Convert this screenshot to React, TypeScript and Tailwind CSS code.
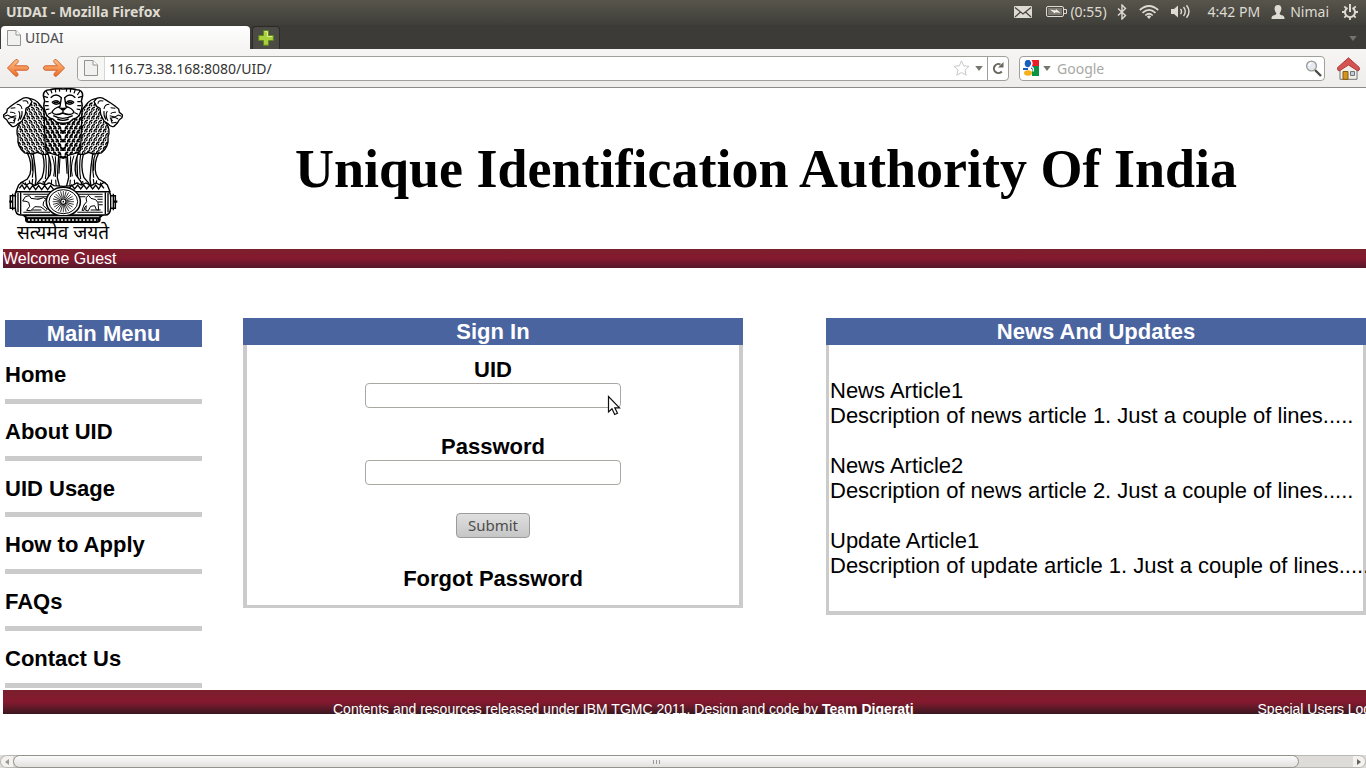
import React from 'react';

const UI = "font-['Noto_Sans','Open_Sans',sans-serif]";

function PageIcon() {
  return (
    <svg width="14" height="16" viewBox="0 0 14 16" aria-hidden="true">
      <path d="M.5 .5h8.5l4.500 4.500v10.500h-13z" fill="#f1f1f0" stroke="#93938f" />
      <path d="M9 .5v4.500h4.500" fill="#fff" stroke="#93938f" />
    </svg>
  );
}

function NavArrow({ flip = false }: { flip?: boolean }) {
  return (
    <svg width="24" height="20" viewBox="0 0 24 20" className={flip ? '-scale-x-100' : ''} aria-hidden="true">
      <defs>
        <linearGradient id="orange" x1="0" y1="0" x2="0" y2="1">
          <stop offset="0" stopColor="#fbc58c" />
          <stop offset="1" stopColor="#ef6a24" />
        </linearGradient>
      </defs>
      <path
        d="M1.500 10L9.500 1.800Q11.500 .8 12.300 2.800Q12.500 3.800 11.500 4.800L8.800 7.800H20.500Q22.500 8 22.500 10Q22.500 12 20.500 12.200H8.800L11.500 15.200Q12.500 16.500 11.700 17.700Q10.500 18.900 9 17.700Z"
        fill="url(#orange)"
        stroke="#d3602c"
        strokeWidth="1"
        strokeLinejoin="round"
      />
    </svg>
  );
}

function Caret({ className = 'fill-[#77756f]' }: { className?: string }) {
  return (
    <svg width="8" height="5" viewBox="0 0 9 6" className={className} aria-hidden="true">
      <path d="M0 0h9L4.500 6z" />
    </svg>
  );
}

function StatusArea() {
  return (
    <div className="flex items-center pr-[8px] text-[14px] text-[#dfdbd2]">
      <svg width="18" height="12" viewBox="0 0 18 12" aria-label="Mail">
        <rect width="18" height="12" rx="1" fill="#dfdbd2" />
        <path d="M1 1.500L9 8l8-6.500M1 11l5.500-5M17 11l-5.500-5" fill="none" stroke="#45433d" strokeWidth="1.200" />
      </svg>
      <svg width="21" height="11" viewBox="0 0 21 11" className="ml-[14px]" aria-label="Battery">
        <rect x=".5" y=".5" width="17" height="10" rx="1.500" fill="none" stroke="#dfdbd2" />
        <rect x="2" y="2" width="14" height="7" fill="#7b786f" />
        <path d="M4 3.500l5.500 1 .5-1.500 4.500 4-5-.8-.7 1.300z" fill="#f2efe8" />
        <path d="M18 3.500h2.500v4H18" fill="none" stroke="#dfdbd2" />
      </svg>
      <span className="ml-[3px]">(0:55)</span>
      <svg width="10" height="16" viewBox="0 0 10 16" className="ml-[10px]" aria-label="Bluetooth">
        <path d="M1 4.500l7.500 7L5 15V1l3.500 3.500-7.500 7" fill="none" stroke="#dfdbd2" strokeWidth="1.400" />
      </svg>
      <svg width="20" height="14" viewBox="0 0 20 14" className="ml-[12px]" aria-label="Wireless">
        <g fill="none" stroke="#dfdbd2" strokeWidth="1.700">
          <path d="M.8 5Q10-3 19.200 5" />
          <path d="M3.500 7.800Q10 2 16.500 7.800" />
          <path d="M6.300 10.500Q10 7 13.700 10.500" />
        </g>
        <path d="M7.800 11.500Q10 9.500 12.200 11.500L10 14z" fill="#dfdbd2" />
      </svg>
      <svg width="21" height="15" viewBox="0 0 21 15" className="ml-[12px]" aria-label="Volume">
        <path d="M0 5h3l4-3.500v12L3 10H0z" fill="#dfdbd2" />
        <g fill="none" stroke="#dfdbd2" strokeWidth="1.400">
          <path d="M9.500 4.800q2 2.700 0 5.400M12.500 3q3.500 4.500 0 9M15.500 1.200q5 6.300 0 12.600" />
        </g>
      </svg>
      <span className="ml-[16px]">4:42 PM</span>
      <svg width="14" height="14" viewBox="0 0 14 14" className="ml-[11px]" aria-hidden="true">
        <path d="M7 0c5 0 3.500 6.500 1.700 8 0 1.500.5 1.800 2.300 2.300 2 .6 2.500 1.200 2.500 3.700H.5c0-2.500.5-3.100 2.500-3.700C4.800 9.800 5.300 9.500 5.300 8 3.500 6.500 2 0 7 0z" fill="#dfdbd2" />
      </svg>
      <span className="ml-[5px]">Nimai</span>
      <svg width="16" height="16" viewBox="0 0 16 16" className="ml-[13px]" aria-label="Session">
        <path d="M5.500 3.800a5 5 0 1 0 5 0" fill="none" stroke="#dfdbd2" strokeWidth="2" />
        <path d="M8 0v8" stroke="#dfdbd2" strokeWidth="2" />
        <path d="M0 8h3M13 8h3M2.300 2.300l2 2M13.700 2.300l-2 2M2.300 13.700l2-2M13.700 13.700l-2-2M8 13v3" stroke="#dfdbd2" strokeWidth="1.800" />
      </svg>
    </div>
  );
}

function BrowserChrome() {
  return (
    <header className={`${UI} text-[14px]`}>
      <div className="flex h-[25px] items-center justify-between bg-linear-to-b from-[#57554b] to-[#3f3e39] pb-[2px] pl-[6px]">
        <span className="text-[14px] font-bold text-[#dfdbd2]">UIDAI - Mozilla Firefox</span>
        <StatusArea />
      </div>
      <div className="flex h-[24px] items-end bg-[#3c3b37] pr-[9px] pl-[1px]">
        <div className="flex h-[23px] w-[249px] items-center gap-[4px] rounded-t-[4px] bg-linear-to-b from-white to-[#f5f4f3] pl-[6px] text-[#4c4c4c]">
          <PageIcon />
          <span>UIDAI</span>
        </div>
        <button type="button" aria-label="New tab" className="ml-[2px] flex h-[23px] w-[28px] items-center justify-center rounded-t-[4px] border border-b-0 border-[#2b2a27] bg-[#4b4a45]">
          <svg width="16" height="16" viewBox="0 0 16 16" aria-hidden="true">
            <path d="M5.500 .7h5v4.800h4.800v5h-4.800v4.800h-5v-4.800H.7v-5h4.800z" fill="#a9cf3c" stroke="#5d8a1b" />
            <path d="M6.500 1.700h3v4.800h4.800" fill="none" stroke="#dcee98" />
          </svg>
        </button>
        <button type="button" aria-label="List all tabs" className="mb-[8px] ml-auto">
          <Caret className="fill-[#74726b]" />
        </button>
      </div>
      <div className="flex h-[39px] items-center border-b border-[#8c8b88] bg-linear-to-b from-[#f6f5f4] to-[#eeedeb] pr-[6px] pl-[6px]">
        <button type="button" aria-label="Back"><NavArrow /></button>
        <button type="button" aria-label="Forward" className="ml-[12px]"><NavArrow flip /></button>
        <div className="ml-[11px] flex h-[25px] flex-1 items-center rounded-[4px] border border-[#a09f9a] bg-white">
          <span className="flex h-full w-[27px] items-center justify-center rounded-l-[4px] border-r border-[#d6d5d2] bg-[#f6f6f5]"><PageIcon /></span>
          <input aria-label="Address" defaultValue="116.73.38.168:8080/UID/" className="h-full min-w-0 flex-1 bg-transparent pl-[4px] text-[#333] outline-none" />
          <svg width="17" height="16" viewBox="0 0 17 16" aria-hidden="true">
            <path d="M8.500 .8l2.200 5 5.300.5-4 3.700 1.200 5.200-4.700-2.700-4.700 2.700L5 10 1 6.300l5.300-.5z" fill="#fff" stroke="#c9c8c5" />
          </svg>
          <button type="button" aria-label="History" className="mr-[4px] ml-[5px]"><Caret /></button>
          <button type="button" aria-label="Reload" className="flex h-full w-[21px] items-center justify-center border-l border-[#a09f9a]">
            <svg width="12" height="12" viewBox="0 0 12 12" aria-hidden="true">
              <path d="M8.500 2.500A4.500 4.500 0 1 0 9.800 9.500" fill="none" stroke="#6a675e" strokeWidth="2" />
              <path d="M11.500 0v5.500H6z" fill="#6a675e" />
            </svg>
          </button>
        </div>
        <div className="ml-[10px] flex h-[25px] w-[306px] items-center rounded-[4px] border border-[#a09f9a] bg-white pr-[2px] pl-[3px]">
          <svg width="16" height="16" viewBox="0 0 16 16" aria-hidden="true">
            <path d="M8 0h8v6H8z" fill="#ec1c24" />
            <path d="M9 6h7v10H9z" fill="#0a9343" />
            <path d="M0 6h8v10H0z" fill="#fff" />
            <path d="M0 8h5v2H0zM8 6h3v3H8z" fill="#1b5ebd" />
            <ellipse cx="5" cy="3.500" rx="3.300" ry="3.700" fill="#1b5ebd" />
            <path d="M7.500 0q3 3.500 0 6.500 4 1 2.500 5" fill="none" stroke="#fff" strokeWidth="1.400" />
            <ellipse cx="5" cy="13" rx="4" ry="2.800" fill="#f6b11a" />
          </svg>
          <span className="ml-[4px]"><Caret /></span>
          <input aria-label="Search" placeholder="Google" className="h-full min-w-0 flex-1 bg-transparent pl-[6px] outline-none placeholder:text-[#a9a8a5]" />
          <svg width="17" height="17" viewBox="0 0 17 17" aria-hidden="true">
            <path d="M10 10l6 6" stroke="#4b4b49" strokeWidth="2.400" />
            <circle cx="6.500" cy="6" r="4.900" fill="#e4eaf0" stroke="#9a9a96" strokeWidth="1.300" />
            <path d="M3.800 6q.2-2.500 2.700-2.700" fill="none" stroke="#fff" strokeWidth="1.400" />
          </svg>
        </div>
        <button type="button" aria-label="Home" className="ml-[12px]">
          <svg width="23" height="23" viewBox="0 0 23 23" aria-hidden="true">
            <path d="M3 11L11.500 4 20 11v11.300H3z" fill="#f0efeb" stroke="#777570" />
            <path d="M11.500 .8L22.300 10.500q.7 3-1.300 3.500L11.500 8 2 14q-2-.5-1.300-3.500z" fill="#d65353" stroke="#b03a3a" />
            <path d="M6 14.500h5v7.800H6z" fill="#d5941f" stroke="#875b10" />
            <path d="M13.500 14.500h4v4h-4z" fill="#b9cde3" stroke="#777570" />
          </svg>
        </button>
      </div>
    </header>
  );
}

function curls(x0: number, x1: number, y0: number, y1: number, lean: number) {
  let d = '';
  let row = 0;
  for (let y = y0; y < y1; y += 13) {
    for (let x = x0 + (row % 2) * 7; x < x1; x += 14) {
      d += `M${x} ${y}q${lean + 8} 0 ${lean + 8} 10M${x + 2} ${y + 5}l${lean + 1} 5`;
    }
    row += 1;
  }
  return d;
}

function SideLion() {
  return (
    <g>
      <path
        d="M84 36Q106 36 120 56L142 84 148 200 132 206 112 198 96 204 74 200Q50 180 54 152 46 132 58 112L66 70Z"
        fill="#fff"
        stroke="#000"
        strokeWidth="4"
      />
      <path d={curls(44, 150, 50, 204, 2)} fill="none" stroke="#000" strokeWidth="3.800" clipPath="url(#leftBody)" />
      <path
        d="M62 40Q74 30 88 36L96 46 88 60 78 66 76 84 66 104 54 112Q46 124 36 120L26 110 20 100 12 94 10 86 20 78 22 68 34 58 46 50Z"
        fill="#fff"
        stroke="#000"
        strokeWidth="4"
      />
      <path d="M13 90l10-4 10 6 16-4M24 98q10-8 22-2l-4 14-14-2M32 66l14-2M50 54q14 0 16 14M68 44q16-4 16 8M56 74q8 12-2 30M66 74q2 14-6 26M30 78q10-2 16 4M40 104l8-10" fill="none" stroke="#000" strokeWidth="3.200" />
      <path d="M82 200Q98 230 90 264L82 278 62 290 54 306H104L108 280Q106 240 100 204Z" fill="#fff" stroke="#000" strokeWidth="4" />
      <path d="M128 204Q138 240 126 274L112 290 106 305H144L148 204Z" fill="#fff" stroke="#000" strokeWidth="4" />
      <path d="M92 204q12 30 5 70M96 214l2 40M136 204q6 40 0 74M66 295l6 9M76 288l4 15M88 282l2 20M98 278l-3 24M118 292l3 12M130 284l-2 20" fill="none" stroke="#000" strokeWidth="3.400" />
    </g>
  );
}

function Emblem() {
  const spokes = Array.from({ length: 24 }, (_, i) => i * 15);
  return (
    <svg width="120" height="154" viewBox="9 5 360 462" role="img" aria-label="State Emblem of India" className="shrink-0">
      <defs>
        <clipPath id="leftBody">
          <path d="M84 38Q106 38 120 56L142 84 148 200 132 204 112 197 96 202 74 198Q52 180 56 152 48 132 60 112L66 70Z" />
        </clipPath>
        <clipPath id="midBody">
          <path d="M132 74H246L242 190Q215 216 190 216T136 190Z" />
        </clipPath>
      </defs>
      <SideLion />
      <g transform="translate(378 0) scale(-1 1)">
        <SideLion />
      </g>

      <path d="M132 74H246L242 190Q232 206 216 206L190 216 162 206Q146 206 136 190Z" fill="#fff" stroke="#000" strokeWidth="4" />
      <g clipPath="url(#midBody)" fill="none" stroke="#000" strokeWidth="4.800">
        <path d={curls(124, 186, 80, 212, 1)} />
        <g transform="translate(378 0) scale(-1 1)">
          <path d={curls(124, 186, 80, 212, 1)} />
        </g>
      </g>

      <path d="M142 198Q158 234 150 266L134 288V306H180L172 274 176 208ZM236 198Q220 234 228 266L244 288V306H198L206 274 202 208Z" fill="#fff" stroke="#000" strokeWidth="4" />
      <path d="M156 208q12 30 5 62M166 210q3 30 0 62M222 208q-12 30-5 62M212 210q-3 30 0 62M144 288l2 16M155 280l-2 24M167 280l2 24M234 288l-2 16M223 280l2 24M211 280l-2 24M180 212l-3 50M198 212l3 50" fill="none" stroke="#000" strokeWidth="3.200" />

      <path
        d="M150 10Q170 5 190 8 210 5 230 10 248 10 248 28L244 44Q250 60 242 76 238 94 220 98L208 108Q190 114 170 108L158 98Q140 94 136 76 128 60 134 44L130 28Q130 10 150 10Z"
        fill="#fff"
        stroke="#000"
        strokeWidth="4.500"
      />
      <path d="M138 14l8 12M152 9l4 12M166 8l1 10M178 8l1 8M200 8l-1 8M212 8l-1 10M226 9l-4 12M240 14l-8 12M132 30l12 4M246 30l-12 4M136 46h10M134 58h12M138 70l10-2M144 84l10-5M242 46h-10M244 58h-12M240 70l-10-2M234 84l-10-5" stroke="#000" strokeWidth="3.600" />
      <path d="M152 34Q168 18 184 34L180 60Q160 66 156 78 166 90 188 80 212 90 222 78 218 66 198 60L194 34Q210 18 226 34M156 48q14-10 24 2-14 8-24-2M222 48q-14-10-24 2 14 8 24-2M174 62q14 10 30 0M189 66v12M160 88q28 16 58 0M172 98q16 8 34 0" fill="none" stroke="#000" strokeWidth="4.200" />
      <path d="M162 46h12v5h-12zM204 46h12v5h-12zM178 64h22l-6 8h-10z" fill="#000" />

      <path d="M56 296L66 288 78 296 90 290 104 298 120 290 134 296 148 290 162 298 190 300 216 298 230 290 244 296 258 290 274 298 288 290 300 296 312 288 322 296 330 316H48Z" fill="#fff" stroke="#000" strokeWidth="4" />
      <path d="M58 306l8-10 7 12 8-10 8 12 9-12 9 12 9-12 9 12 9-12 9 12 9-12 9 12M206 308l9-12 9 12 9-12 9 12 9-12 9 12 9-12 9 12 9-12 9 12 8-12 8 10" fill="none" stroke="#000" strokeWidth="4" />
      <path d="M50 316H326Q332 320 332 328H346V366H332Q330 386 316 386H62Q46 386 46 366H31V328H46Q44 320 50 316Z" fill="#fff" stroke="#000" strokeWidth="4.500" />
      <path d="M38 322v50M46 326v42M54 320v58M62 318v66M316 318v66M324 320v58M332 326v42M340 322v50" stroke="#000" strokeWidth="4" />
      <path d="M28 346h10M340 346h12" stroke="#000" strokeWidth="7" />
      <path d="M70 324h76M104 331h38M112 338h26M70 378h80M84 371h40M232 324h76M240 331h16M284 331h24M232 378h76M272 371h30M292 339h16M292 347h16M296 355h12" stroke="#000" strokeWidth="3.200" />
      <path d="M68 344l8-13 12-3 5 8 22 3 15-5 9 5-8 7-2 11 13 12-5 4-14-11-18-1-13 12-12-1 9-12-3-12-8-3z" fill="#fff" stroke="#000" strokeWidth="3" />
      <path d="M246 372l6-16 8-10-2-12 8-7 7 9 14 4 7 9 2 22-7-1-5-12-12 2-8 14-7-2 2-14-5 5-2 9z" fill="#fff" stroke="#000" strokeWidth="3" />
      <ellipse cx="190" cy="346" rx="51" ry="43" fill="#fff" stroke="#000" strokeWidth="4.500" />
      <ellipse cx="190" cy="346" rx="43" ry="36" fill="#fff" stroke="#000" strokeWidth="3" />
      {spokes.map((a) => (
        <path key={a} d="M190 336V314" stroke="#000" strokeWidth="2.200" transform={`rotate(${a} 190 346)`} />
      ))}
      <circle cx="190" cy="346" r="8" fill="#fff" stroke="#000" strokeWidth="3.500" />
      <circle cx="190" cy="346" r="2.500" fill="#000" />

      <path d="M66 386H312L302 394V402Q300 410 290 410H86Q76 410 75 402V394Z" fill="#000" />
      <path d="M80 391H298" stroke="#fff" strokeWidth="2.500" />
      <path d="M84 401H294" stroke="#fff" strokeWidth="5" strokeDasharray="6 5" />
      <text x="189" y="459" textAnchor="middle" className="font-['Noto_Sans_Devanagari','Noto_Sans',sans-serif] text-[57px]">
        सत्यमेव जयते
      </text>
    </svg>
  );
}

const menu = ['Home', 'About UID', 'UID Usage', 'How to Apply', 'FAQs', 'Contact Us'];

const news = [
  ['News Article1', 'Description of news article 1. Just a couple of lines.....'],
  ['News Article2', 'Description of news article 2. Just a couple of lines.....'],
  ['Update Article1', 'Description of update article 1. Just a couple of lines.....'],
];

const panelTitle = 'bg-[#4a64a0] text-center font-bold leading-[27px] text-white';
const field = 'mt-[1px] block h-[25px] w-[256px] rounded-[4px] border border-[#a9a8a2] bg-white px-[4px] outline-none';

export default function App() {
  return (
    <div className="flex min-h-screen flex-col overflow-hidden bg-white font-['Liberation_Sans',Arial,sans-serif] text-black">
      <BrowserChrome />

      <main className="flex-1 pl-[3px]">
        <div className="flex h-[161px] items-start gap-[43px]">
          <Emblem />
          <h1 className="flex-1 pt-[49px] text-center font-['Liberation_Serif',serif] text-[54px] leading-[64px] font-bold whitespace-nowrap">
            Unique Identification Authority Of India
          </h1>
        </div>

        <p className="bg-linear-to-b from-[#7b1f2c] via-[#85192f] to-[#56172a] text-[16px] leading-[19px] text-white">Welcome Guest</p>

        <div className="flex items-start pt-[50px] text-[22px] leading-[25px]">
          <nav aria-label="Main" className="mt-[2px] ml-[2px] w-[197px] shrink-0">
            <h2 className={panelTitle}>Main Menu</h2>
            <ul className="grid h-[341px] grid-rows-6 font-bold">
              {menu.map((item) => (
                <li key={item} className="border-b-[5px] border-[#cbcbcb] pt-[15px]">
                  <a href="#">{item}</a>
                </li>
              ))}
            </ul>
          </nav>

          <section className="ml-[41px] w-[500px] shrink-0">
            <h2 className={panelTitle}>Sign In</h2>
            <form
              className="flex flex-col items-center border-x-4 border-b-[3px] border-[#cbcbcb] pt-[12px] pb-[14px] font-bold"
              onSubmit={(e: React.FormEvent) => e.preventDefault()}
            >
              <label htmlFor="uid">UID</label>
              <div className="relative">
                <input id="uid" className={field} />
                <svg width="14" height="22" viewBox="0 0 14 22" className="absolute top-[13px] left-[242px]" aria-hidden="true">
                  <path d="M1.500 1.500v15.500l3.500-3.200 2.700 5.700 2.800-1.200-2.700-5.500h4.700z" fill="#fff" stroke="#111" strokeWidth="1.200" />
                </svg>
              </div>
              <label htmlFor="password" className="mt-[26px]">Password</label>
              <input id="password" type="password" className={field} />
              <button
                type="submit"
                className={`${UI} mt-[28px] h-[25px] w-[74px] rounded-[4px] border border-[#9b9b9b] bg-linear-to-b from-[#dfdfdf] to-[#c6c6c6] text-[15px] leading-[21px] font-normal text-[#4c4c4c]`}
              >
                Submit
              </button>
              <a href="#" className="mt-[28px]">Forgot Password</a>
            </form>
          </section>

          <section className="ml-[83px] min-w-0 flex-1">
            <h2 className={panelTitle}>News And Updates</h2>
            <div className="flex flex-col gap-[25px] border-x-[3px] border-b-4 border-[#cbcbcb] py-[33px] pl-[1px] whitespace-nowrap">
              {news.map(([title, text]) => (
                <article key={title}>
                  <h3>{title}</h3>
                  <p>{text}</p>
                </article>
              ))}
            </div>
          </section>
        </div>

        <footer className="mt-[2px] flex h-[24px] gap-[344px] overflow-hidden bg-linear-to-b from-[#7b1f2c] via-[#85192f] to-[#3a1620] pt-[11px] pl-[330px] text-[14px] leading-[16px] whitespace-nowrap text-white">
          <p className="shrink-0">
            Contents and resources released under IBM TGMC 2011. Design and code by <b>Team Digerati</b>
          </p>
          <a href="#" className="shrink-0">Special Users Login</a>
        </footer>
      </main>

      <div className="flex h-[13px] bg-[#dedcd8]">
        <button type="button" aria-label="Scroll left" className="flex w-[13px] items-center justify-center rounded-l-full border border-r-0 border-[#bab8b3] bg-[#f3f2f0]">
          <svg width="4" height="6" viewBox="0 0 4 6" aria-hidden="true"><path d="M4 0v6L0 3z" fill="#9a9893" /></svg>
        </button>
        <div className="flex flex-1 border-y border-[#bab8b3]">
          <div className="-my-px flex w-[96%] items-center justify-center gap-[2px] rounded-full border border-[#94928d] bg-linear-to-b from-[#fbfbfa] to-[#e2e1de]">
            <i className="h-[4px] w-px bg-[#999]" />
            <i className="h-[4px] w-px bg-[#999]" />
            <i className="h-[4px] w-px bg-[#999]" />
          </div>
        </div>
        <button type="button" aria-label="Scroll right" className="flex w-[13px] items-center justify-center rounded-r-full border border-l-0 border-[#bab8b3] bg-[#f3f2f0]">
          <svg width="4" height="6" viewBox="0 0 4 6" aria-hidden="true"><path d="M0 0v6l4-3z" fill="#66645f" /></svg>
        </button>
      </div>
    </div>
  );
}
